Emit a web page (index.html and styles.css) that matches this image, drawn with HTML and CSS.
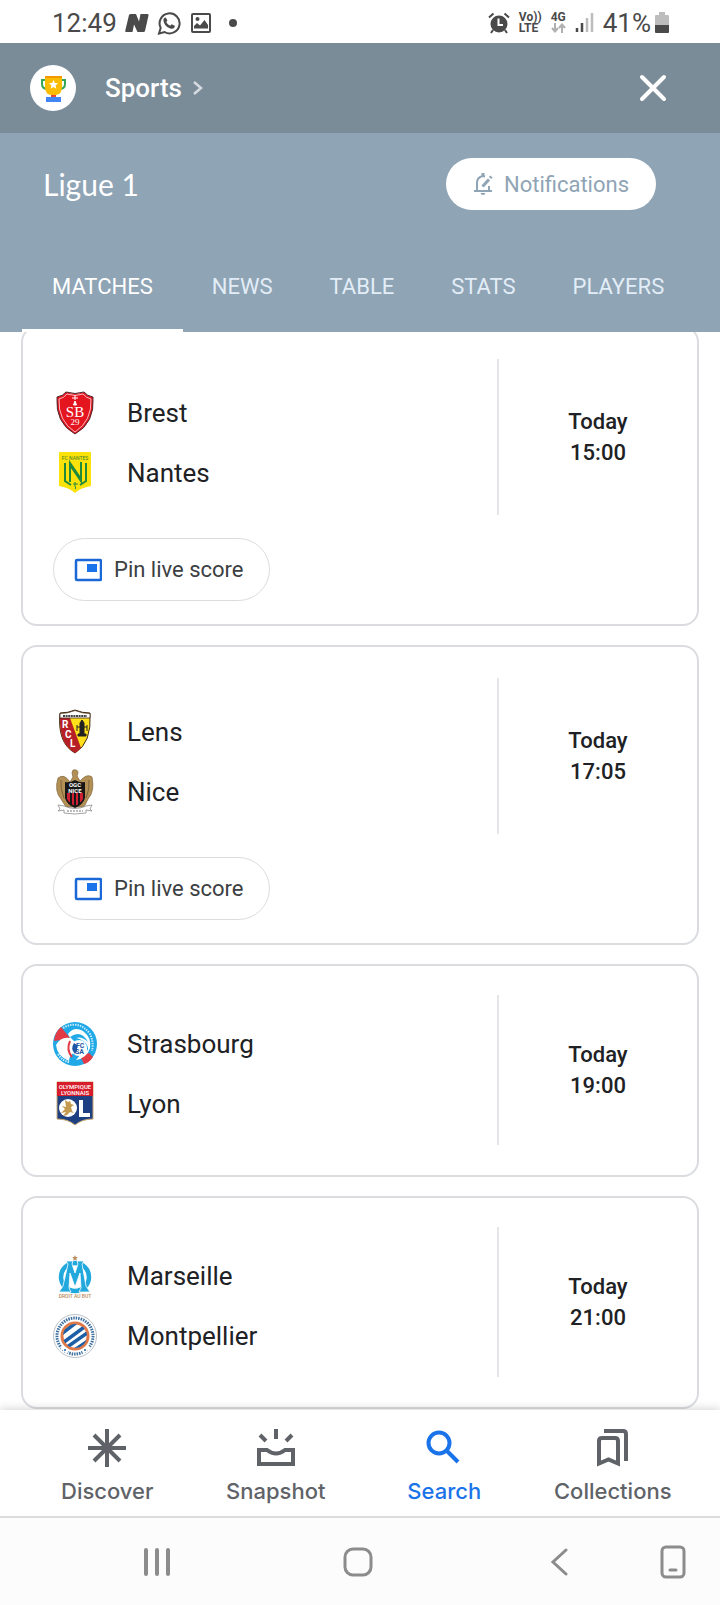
FILE: index.html
```
<!DOCTYPE html>
<html lang="en">

<head>
    <meta charset="UTF-8">
    <meta name="viewport" content="width=device-width, initial-scale=1">
    <title>Ligue 1 - Matches</title>
    <link rel="stylesheet" href="styles.css">
</head>

<body>
    <div class="status">
        <div class="status-left">
            <span class="clock">12:49</span>
            <svg width="24" height="20" viewBox="0 0 24 20" fill="#4a4a4a">
                <path d="M4 2Q4.400 1 6 1H11L14 8.500 15.500 1H22.500Q24 1 23.500 2.500L20 18Q19.700 19 18.500 19H12.500L9 11.500 7.500 19H1Q0 19 .3 17.500Z" />
            </svg>
            <svg width="24" height="24" viewBox="0 0 24 24" fill="none" stroke="#4a4a4a">
                <path d="M2 22.500l1.700-5.600A10 10 0 1 1 7.600 21Z" stroke-width="2" />
                <path fill="#4a4a4a" stroke="none" d="M8.800 6.400l1.600 3.200-1.100 1.500c.9 1.900 2.100 2.900 3.900 3.700l1.400-1.600 3.200 1.500c.3 2-1.300 3-3 3C10.500 17.500 6.700 13.500 6.400 9.300c0-1.700 1-3 2.400-2.900Z" />
            </svg>
            <svg class="picture" width="20" height="20" viewBox="0 0 20 20">
                <rect x="1" y="1" width="18" height="18" rx="1" fill="none" stroke="#4a4a4a" stroke-width="2" />
                <circle cx="6.500" cy="6" r="2" fill="#4a4a4a" />
                <path d="M3 15.500V13l3-3 3 2.500 4.500-5.500 3.500 5v3.500Z" fill="#4a4a4a" />
            </svg>
            <span class="dot"></span>
        </div>
        <div class="status-right">
            <svg width="22" height="22" viewBox="0 0 22 22">
                <circle cx="11" cy="12" r="8.500" fill="#4a4a4a" />
                <path d="M1 5.500L5.500 1.500M21 5.500L16.500 1.500M5 18l-2 3M17 18l2 3" stroke="#4a4a4a" stroke-width="2" />
                <path d="M10.500 6.500V13H15" fill="none" stroke="#fff" stroke-width="2" />
            </svg>
            <span class="tiny">Vo))<br>LTE</span>
            <span class="tiny">4G
                <svg width="15" height="10" viewBox="0 0 15 10" fill="none" stroke="#b0b0b0" stroke-width="2">
                    <path d="M4 0v8M1 5l3 3.500L7 5M11 10V2M8 5l3-3.500L14 5" />
                </svg>
            </span>
            <svg width="19" height="20" viewBox="0 0 19 20">
                <path d="M2 15v4M7 10v9" stroke="#4a4a4a" stroke-width="2.500" />
                <path d="M12 5v14M17 0v19" stroke="#bdbdbd" stroke-width="2.500" />
            </svg>
            <span class="battery">41%
                <svg width="14" height="22" viewBox="0 0 14 22">
                    <path d="M4 0h6v3h3q1 0 1 1v10H0V4q0-1 1-1h3Z" fill="#bdbdbd" />
                    <path d="M0 13h14v7q0 1-1 1H1q-1 0-1-1Z" fill="#4a4a4a" />
                </svg>
            </span>
        </div>
    </div>

    <header class="topbar">
        <span class="logo">
            <svg width="27" height="27" viewBox="0 0 27 27">
                <path d="M6 5H2v4q0 5 6 5M21 5h4v4q0 5-6 5" fill="none" stroke="#34a853" stroke-width="2" />
                <path d="M5 1h17v11q0 7-6 8v3h-5v-3q-6-1-6-8Z" fill="#fbbc04" />
                <path d="M5 1h17v2H5Z" fill="#f29900" />
                <path d="M11 20h5v3h-5Z" fill="#ea4335" />
                <path d="M6 22h15v5H6Z" fill="#4285f4" />
                <path d="M13.500 5l1.300 3 3.200.3-2.400 2.200.7 3.200-2.800-1.700-2.800 1.700.7-3.200L9 8.300l3.200-.3Z" fill="#fff" />
            </svg>
        </span>
        <a class="crumb" href="#">Sports
            <svg width="12" height="16" viewBox="0 0 12 16" fill="none" stroke="#d5dbe0" stroke-width="2.500">
                <path d="M2 2l7 6-7 6" />
            </svg>
        </a>
        <button class="close" type="button" aria-label="Close">
            <svg width="28" height="28" viewBox="0 0 28 28" stroke="#fff" stroke-width="4" stroke-linecap="round">
                <path d="M3 3l22 22M25 3L3 25" />
            </svg>
        </button>
    </header>

    <div class="league">
        <div class="league-row">
            <h1>Ligue 1</h1>
            <button class="notify" type="button">
                <svg width="20" height="24" viewBox="0 0 20 24" fill="none" stroke="#8fa4b5" stroke-width="2">
                    <path d="M1 19h18M4 19v-8q0-6 6-7M16 14v5M12 4.500L10 4" />
                    <path d="M10 1v3" stroke-width="3" />
                    <path d="M9.500 14.500l6.500-7" stroke-width="3" />
                    <path d="M17 6l1.500-1.500" stroke-width="3" />
                    <path d="M7.500 21h5q-.5 2-2.500 2t-2.500-2Z" fill="#8fa4b5" stroke="none" />
                </svg>
                Notifications
            </button>
        </div>
        <nav class="tabs">
            <a class="tab active" href="#">MATCHES</a>
            <a class="tab" href="#">NEWS</a>
            <a class="tab" href="#">TABLE</a>
            <a class="tab" href="#">STATS</a>
            <a class="tab" href="#">PLAYERS</a>
        </nav>
    </div>

    <main class="list">
        <article class="card">
            <div class="match tall">
                <div class="teams">
                    <div class="team">
                        <svg class="crest" viewBox="0 0 44 44">
                            <path d="M4 6q6-1 9-5 9 3 18 0 3 4 9 5 2 26-18 37Q2 32 4 6Z" fill="#e4151f" stroke="#4d2b2f" />
                            <path d="M6 8q5-1 8-5 8 3 16 0 3 4 8 5 1 22-16 33Q5 30 6 8Z" fill="none" stroke="#fff" stroke-width=".7" />
                            <path d="M22 4v5M19 7h6M22 10l1.500 4h-3Z" stroke="#fff" fill="#fff" />
                            <g font-family="Liberation Serif" fill="#fff" text-anchor="middle">
                                <text x="22" y="26" font-size="15">SB<tspan x="22" y="34" font-size="9">29</tspan></text>
                            </g>
                        </svg>
                        <span>Brest</span>
                    </div>
                    <div class="team">
                        <svg class="crest" viewBox="0 0 44 44">
                            <path d="M7 1h30q1 0 1 1v33q-11 2-16 7-5-5-16-7V2q0-1 1-1Z" fill="#fae20a" />
                            <text x="22" y="9" font-family="Roboto" font-size="5" fill="#3a7f2c" text-anchor="middle">FC NANTES</text>
                            <path d="M12 12v18l6 4M33 12v18l-6 4M17 31V14l11 16V11M17 14v-2l11 16" fill="none" stroke="#1f8a3b" stroke-width="2" />
                            <path d="M22 31v5M20 33h5M22.500 36v2" stroke="#1f8a3b" />
                        </svg>
                        <span>Nantes</span>
                    </div>
                </div>
                <div class="time">Today<br>15:00</div>
            </div>
            <button class="pin" type="button">
                <svg width="28" height="24" viewBox="0 0 28 24">
                    <rect x="2" y="2" width="25" height="20" rx="1" fill="none" stroke="#1a67d8" stroke-width="2.500" />
                    <rect x="13" y="6" width="10" height="8" fill="#1a73e8" />
                </svg>
                Pin live score
            </button>
        </article>

        <article class="card">
            <div class="match tall">
                <div class="teams">
                    <div class="team">
                        <svg class="crest" viewBox="0 0 44 44">
                            <path d="M7 3q8 0 15-3 7 3 15 3 2 30-15 40Q4 33 7 3Z" fill="#ffe01b" stroke="#3f2a1f" />
                            <path d="M7 8h10l11 30q-3 3-6 5Q6 34 7 8Z" fill="#b71f27" />
                            <path d="M7 3.500q8 0 15-3 7 3 15 3V8H7Z" fill="#fff" stroke="#3f2a1f" stroke-width=".8" />
                            <path d="M10 6h24" stroke="#444" stroke-width="2" stroke-dasharray="2 .6" />
                            <g font-family="Roboto" font-weight="700" font-size="10" fill="#fff">
                                <text x="9" y="18">R</text>
                                <text x="12" y="28">C</text>
                                <text x="17" y="37">L</text>
                            </g>
                            <path d="M29 10l2 3v11h-4V13ZM25 24h8v2h-8ZM24 17h10M24 15v6M34 15v6" fill="#222" stroke="#222" />
                        </svg>
                        <span>Lens</span>
                    </div>
                    <div class="team">
                        <svg class="crest" viewBox="0 0 44 44">
                            <path d="M20 0q5-1 5 3l-1 3 3 5q7-8 12-4 3 14-4 22l-4 8H13l-5-8Q1 21 5 8q6-5 12 4l3-5-1-4Z" fill="#b39156" stroke="#806439" stroke-width=".7" />
                            <path d="M8 10q-1 9 3 18M36 10q1 9-3 18" fill="none" stroke="#806439" />
                            <path d="M12 12q5 1 10-2 5 3 10 2v16q-2 7-10 10-8-3-10-10Z" fill="#191617" />
                            <path d="M14 23h16v6q-2 4-8 7-6-3-8-7Z" fill="#cf1f32" />
                            <path d="M18 23v12M22 23v14M26 23v12" stroke="#191617" stroke-width="2" />
                            <g font-family="Roboto" font-weight="700" font-size="6" fill="#fff" text-anchor="middle">
                                <text x="22" y="17">OGC</text>
                                <text x="22" y="23">NICE</text>
                            </g>
                            <path d="M5 35l6 1q11 5 22 0l6-1-2 4 2 2-6-1v3q-11 2-22 0v-3l-6 1 2-2Z" fill="#fff" stroke="#8b8b8b" stroke-width=".8" />
                            <path d="M14 41h16" stroke="#777" stroke-dasharray="2 1" />
                        </svg>
                        <span>Nice</span>
                    </div>
                </div>
                <div class="time">Today<br>17:05</div>
            </div>
            <button class="pin" type="button">
                <svg width="28" height="24" viewBox="0 0 28 24">
                    <rect x="2" y="2" width="25" height="20" rx="1" fill="none" stroke="#1a67d8" stroke-width="2.500" />
                    <rect x="13" y="6" width="10" height="8" fill="#1a73e8" />
                </svg>
                Pin live score
            </button>
        </article>

        <article class="card">
            <div class="match">
                <div class="teams">
                    <div class="team">
                        <svg class="crest" viewBox="0 0 44 44">
                            <circle cx="22" cy="22" r="22" fill="#20a9e6" />
                            <path d="M8 5L17 16 8 18 1 19Q2 10 8 5ZM27 34l9-3 4 4q-4 6-9 7Z" fill="#e23b46" />
                            <path d="M3 23Q8 14 17 16L15 12Q21 4 30 9q9 7 7 17-3 10-14 12 6-6 4-11-11 5-11 12Q4 34 3 23Z" fill="#fff" />
                            <path d="M17 15q11-8 18 5-6-6-12-4 13 3 12 13-3-10-13-9Z" fill="#20a9e6" />
                            <path d="M17 19q-4 9 2 16" fill="none" stroke="#e23b46" stroke-width="2" />
                            <circle cx="26" cy="26" r="8" fill="#fff" />
                            <path d="M21 21q-4 6 1 11l2-3v-6" fill="#1e56a5" />
                            <g font-family="Roboto" font-weight="700" font-size="7" fill="#1e56a5">
                                <text x="23" y="26">FC</text>
                                <text x="22" y="32">SA</text>
                            </g>
                            <path d="M10 6Q26-3 37 12q4 8 2 17M5 32q5 8 12 8" fill="none" stroke="#c6eafa" stroke-width="2" stroke-dasharray="1.500 1" />
                        </svg>
                        <span>Strasbourg</span>
                    </div>
                    <div class="team">
                        <svg class="crest" viewBox="0 0 44 44">
                            <path d="M4 0h36v37q-11 0-18 6-7-6-18-6Z" fill="#1e3f82" stroke="#c9ab72" />
                            <path d="M4 0h36v14H4Z" fill="#d71c2b" />
                            <g font-family="Roboto" font-weight="500" font-size="6" fill="#fff" text-anchor="middle">
                                <text x="22" y="7">OLYMPIQUE</text>
                                <text x="22" y="13">LYONNAIS</text>
                            </g>
                            <circle cx="15" cy="26" r="9" fill="#fff" />
                            <path d="M12 18l3 2 2-1 1 3 3 1-3 2 1 4 2 2-4-1-3 3-4 1 3-4-5 1 4-4-3-3 4 1Z" fill="#c49b51" />
                            <path d="M26 18h4v13h7v4H26Z" fill="#fff" />
                        </svg>
                        <span>Lyon</span>
                    </div>
                </div>
                <div class="time">Today<br>19:00</div>
            </div>
        </article>

        <article class="card">
            <div class="match">
                <div class="teams">
                    <div class="team">
                        <svg class="crest" viewBox="0 0 44 44">
                            <path d="M22 1l.8 2 2.200.2-1.700 1.300.5 2.200L22 5.500l-1.800 1.200.5-2.200L19 3.200l2.200-.2Z" fill="#b98b5c" />
                            <circle cx="22" cy="23" r="14" fill="none" stroke="#21a8dc" stroke-width="4.500" />
                            <path d="M13 7h7l-1 3 3 9 3-9-1-3h7l-2 3 4 22 4 6H26l2-4-1-15-5 14-5-14-1 15 2 4H6l4-6 5-22Z" fill="#21a8dc" stroke="#fff" stroke-width=".8" />
                            <text x="22" y="44" font-family="Roboto" font-weight="500" font-size="5" fill="#b98b5c" text-anchor="middle">DROIT AU BUT</text>
                        </svg>
                        <span>Marseille</span>
                    </div>
                    <div class="team">
                        <svg class="crest" viewBox="0 0 44 44">
                            <defs>
                                <clipPath id="ball">
                                    <circle cx="22" cy="22" r="12" />
                                </clipPath>
                            </defs>
                            <circle cx="22" cy="22" r="21.500" fill="#fff" stroke="#b9c2ca" />
                            <circle cx="22" cy="22" r="13" fill="#fff" stroke="#e0794a" stroke-width="3" />
                            <g clip-path="url(#ball)">
                                <path d="M6 22L24 8M7 31L34 11M10 36L37 17M20 37l18-12" stroke="#1c5fa6" stroke-width="3.500" />
                            </g>
                            <circle cx="22" cy="22" r="18" fill="none" stroke="#3c6f9f" stroke-width="3" stroke-dasharray="1.500 1" />
                            <path d="M7 34l3-3 6 5-2 4ZM29 36l6-5 3 3-8 6Z" fill="#fff" />
                            <circle cx="12" cy="36" r="1" fill="#1c5fa6" />
                            <circle cx="32" cy="36" r="1" fill="#1c5fa6" />
                        </svg>
                        <span>Montpellier</span>
                    </div>
                </div>
                <div class="time">Today<br>21:00</div>
            </div>
        </article>
    </main>

    <footer class="bottom">
        <nav class="menu">
            <a class="menu-item" href="#">
                <svg width="40" height="40" viewBox="0 0 40 40" stroke="#5f6368" stroke-width="4">
                    <path d="M20 1v38M1 20h38M7 7l26 26M33 7L7 33" />
                </svg>
                Discover
            </a>
            <a class="menu-item" href="#">
                <svg width="40" height="40" viewBox="0 0 40 40" fill="none" stroke="#5f6368" stroke-width="4">
                    <path d="M20 1v10M4 7l6 6M36 7l-6 6M3 22h8q9 7 18 0h8v14H3Z" />
                </svg>
                Snapshot
            </a>
            <a class="menu-item active" href="#">
                <svg width="40" height="40" viewBox="0 0 40 40" fill="none" stroke="#1a73e8" stroke-width="4">
                    <circle cx="15" cy="15" r="10.500" />
                    <path d="M22 22l12 12" />
                </svg>
                Search
            </a>
            <a class="menu-item" href="#">
                <svg width="40" height="40" viewBox="0 0 40 40" fill="none" stroke="#5f6368" stroke-width="4">
                    <path d="M6 35.500V13q0-3 3-3h13q3 0 3 3v22.500l-9.500-4Z" />
                    <path d="M11 3h19q3 0 3 3v27" />
                </svg>
                Collections
            </a>
        </nav>
        <div class="system">
            <button type="button" aria-label="Recent apps">
                <svg width="28" height="30" viewBox="0 0 28 30" stroke="#8c8c8c" stroke-width="4" stroke-linecap="round">
                    <path d="M3 3v24M14 3v24M25 3v24" />
                </svg>
            </button>
            <button type="button" aria-label="Home">
                <svg width="30" height="30" viewBox="0 0 30 30" fill="none" stroke="#8c8c8c" stroke-width="3">
                    <rect x="2" y="2" width="26" height="26" rx="8" />
                </svg>
            </button>
            <button type="button" aria-label="Back">
                <svg width="18" height="30" viewBox="0 0 18 30" fill="none" stroke="#8c8c8c" stroke-width="3" stroke-linecap="round">
                    <path d="M16 3L3 15l13 12" />
                </svg>
            </button>
            <button type="button" aria-label="One-handed mode">
                <svg width="26" height="34" viewBox="0 0 26 34" fill="none" stroke="#8c8c8c" stroke-width="3">
                    <rect x="2" y="2" width="22" height="30" rx="4" />
                    <path d="M10 25h6" stroke-linecap="round" />
                </svg>
            </button>
        </div>
    </footer>
</body>

</html>
```
FILE: styles.css
```
* {
    box-sizing: border-box;
}

body {
    margin: 0;
    min-height: 100vh;
    display: flex;
    flex-direction: column;
    background: #fff;
    color: #202124;
    font-family: Roboto, "Liberation Sans", sans-serif;
    font-size: 22px;
}

a {
    color: inherit;
    text-decoration: none;
}

button {
    margin: 0;
    padding: 0;
    border: none;
    background: none;
    color: inherit;
    font: inherit;
}

svg {
    display: block;
    flex: none;
}

/* phone status bar */
.status {
    height: 43px;
    padding: 2px 51px 0 52px;
    display: flex;
    align-items: center;
    justify-content: space-between;
    color: #4a4a4a;
    font-size: 26px;
}

.status-left,
.status-right,
.battery {
    display: flex;
    align-items: center;
}

.status-left {
    gap: 8px;
}

.status-right {
    gap: 9px;
}

.battery {
    gap: 4px;
}

.picture {
    margin-left: 2px;
}

.dot {
    width: 8px;
    height: 8px;
    margin-left: 10px;
    border-radius: 50%;
    background: #4a4a4a;
}

.tiny {
    font-size: 12px;
    line-height: 11px;
    font-weight: 700;
}

/* header */
.topbar {
    height: 90px;
    padding: 0 53px 0 30px;
    display: flex;
    align-items: center;
    background: #7b8c99;
    color: #fff;
}

.logo {
    width: 46px;
    height: 46px;
    display: grid;
    place-items: center;
    border-radius: 50%;
    background: #fff;
}

.crumb {
    margin-left: 29px;
    display: flex;
    align-items: center;
    gap: 10px;
    font-size: 26px;
    font-weight: 500;
}

.close {
    margin-left: auto;
}

.league {
    position: relative;
    z-index: 1;
    background: #8fa4b5;
    color: #fff;
}

.league-row {
    padding: 25px 64px 0 43px;
    display: flex;
    align-items: center;
    justify-content: space-between;
}

h1 {
    margin: 0;
    font-family: Lato, Roboto, sans-serif;
    font-size: 30px;
    font-weight: 400;
}

.notify {
    height: 52px;
    padding: 0 27px;
    display: flex;
    align-items: center;
    gap: 11px;
    border-radius: 26px;
    background: #fff;
    color: #8fa4b5;
}

.tabs {
    padding: 35px 22px 0;
    display: flex;
    gap: 1px;
}

.tab {
    padding: 0 28px;
    line-height: 84px;
    border-bottom: 3px solid transparent;
    color: #e3edf7;
}

.tab.active {
    padding: 0 30px;
    border-color: #fff;
    color: #fff;
}

/* match cards, the first one is scrolled a little under the header */
.list {
    margin-top: -6px;
    padding: 0 21px;
    display: grid;
    gap: 19px;
}

.card {
    border: 2px solid #dadce0;
    border-radius: 16px;
}

.match {
    padding: 29px 0 30px;
    display: grid;
    grid-template-columns: 1fr 200px;
}

.match.tall {
    padding: 31px 0 23px;
}

.teams {
    min-height: 150px;
    padding: 8px 0 0 30px;
    display: flex;
    flex-direction: column;
    justify-content: center;
}

.tall .teams {
    min-height: 156px;
    padding-top: 12px;
}

.team {
    height: 60px;
    display: flex;
    align-items: center;
    gap: 30px;
    font-size: 26px;
}

.crest {
    width: 44px;
    height: 44px;
    overflow: visible;
}

.time {
    display: grid;
    place-content: center;
    border-left: 2px solid #e4e5e8;
    line-height: 31px;
    font-weight: 500;
    text-align: center;
}

.pin {
    height: 63px;
    margin: 0 0 23px 30px;
    padding: 0 25px 0 20px;
    display: flex;
    align-items: center;
    gap: 12px;
    border: 1px solid #dadce0;
    border-radius: 32px;
    color: #3c4043;
}

/* bottom navigation */
.bottom {
    position: sticky;
    bottom: 0;
    z-index: 2;
    margin-top: auto;
    box-shadow: 0 -2px 8px rgba(0, 0, 0, 0.15);
}

.menu {
    height: 106px;
    padding: 18px 23px 0;
    display: grid;
    grid-template-columns: repeat(4, 1fr);
    background: #fff;
    color: #5f6368;
}

.menu-item {
    display: flex;
    flex-direction: column;
    align-items: center;
    gap: 10px;
    font-family: Inter, Roboto, sans-serif;
    font-size: 22px;
    line-height: 26px;
    font-weight: 500;
}

.menu-item.active {
    color: #1a73e8;
}

.system {
    height: 89px;
    padding: 0 34px 0 56px;
    display: grid;
    grid-template-columns: 1fr 1fr 1fr 26px;
    align-items: center;
    justify-items: center;
    border-top: 2px solid #dcdcdc;
    background: #fcfcfc;
}
```
